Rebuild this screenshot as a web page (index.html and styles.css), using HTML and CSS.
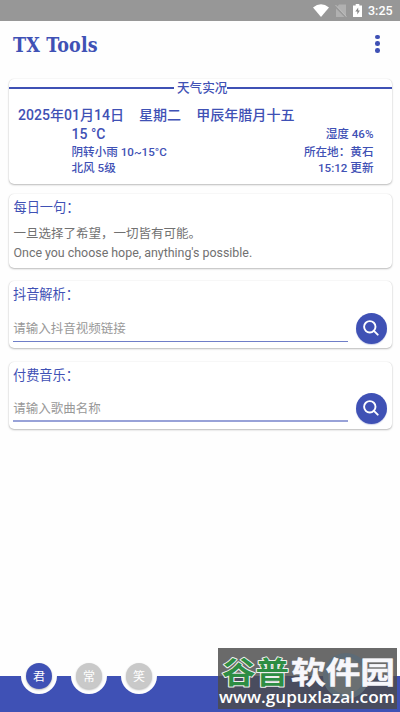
FILE: index.html
```html
<!DOCTYPE html>
<html lang="zh-CN">
<head>
<meta charset="utf-8">
<title>TX Tools</title>
<link rel="stylesheet" href="styles.css">
</head>
<body>
<div class="app">
  <div class="status">
    <svg class="wifi" width="16" height="13" viewBox="0 0 16 13"><path d="M0 3.600Q8-3 16 3.600L8 13Z" fill="#fff"/></svg>
    <svg class="sim" width="12" height="13" viewBox="0 0 12 13"><path d="M4 .5h7V13L2 3Z M1 4.500L9.500 13H1Z" fill="#b0b0b0"/><path d="M.5 1L11.500 12.500" stroke="#bcbcbc"/></svg>
    <svg class="battery" width="9" height="13" viewBox="0 0 9 13"><path d="M0 1.500h2.700V0h3.600v1.500H9V13H0Z" fill="#fff"/><path d="M5.200 3.500L2.300 7.600h2v3l2.600-4.100H5.200Z" fill="#888"/></svg>
    <span>3:25</span>
  </div>
  <header class="header">
    <h1>TX Tools</h1>
    <div class="menu"><i></i><i></i><i></i></div>
  </header>
  <main>
    <section class="card weather">
      <div class="caption"><span>天气实况</span></div>
      <div class="date"><span>2025年01月14日</span><span>星期二</span><span>甲辰年腊月十五</span></div>
      <div class="row temp"><b>15 °C</b><span>湿度 46%</span></div>
      <div class="row"><span>阴转小雨 10~15°C</span><span>所在地：黄石</span></div>
      <div class="row last"><span>北风 5级</span><span>15:12 更新</span></div>
    </section>
    <section class="card quote">
      <h2>每日一句：</h2>
      <p>一旦选择了希望，一切皆有可能。</p>
      <p class="en">Once you choose hope, anything's possible.</p>
    </section>
    <section class="card search">
      <h2>抖音解析：</h2>
      <div class="form">
        <div class="field">请输入抖音视频链接</div>
        <div class="button"><svg width="16" height="16" viewBox="0 0 16 16"><circle cx="6.800" cy="6.800" r="5.700"/><path d="M10.700 10.700L14.700 14.700"/></svg></div>
      </div>
    </section>
    <section class="card search second">
      <h2>付费音乐：</h2>
      <div class="form">
        <div class="field">请输入歌曲名称</div>
        <div class="button"><svg width="16" height="16" viewBox="0 0 16 16"><circle cx="6.800" cy="6.800" r="5.700"/><path d="M10.700 10.700L14.700 14.700"/></svg></div>
      </div>
    </section>
  </main>
  <nav class="bottom">
    <div class="tab active"><span>君</span></div>
    <div class="tab"><span>常</span></div>
    <div class="tab"><span>笑</span></div>
  </nav>
  <div class="mark">
    <div class="avatar"></div>
    <svg width="179" height="61" viewBox="0 0 179 61">
      <g class="brand">
        <text class="green" x="4" y="35" textLength="67" lengthAdjust="spacingAndGlyphs">谷普</text>
        <text class="white" x="73" y="35" textLength="104" lengthAdjust="spacingAndGlyphs">软件园</text>
      </g>
      <text class="url" x="1" y="55" textLength="176" lengthAdjust="spacingAndGlyphs">www.gupuxlazal.com</text>
    </svg>
  </div>
</div>
</body>
</html>
```
FILE: styles.css
```css
* { box-sizing: border-box; }
body {
  margin: 0;
  background: #fefefe;
  color: #3f51b5;
  font-family: Roboto, "Noto Sans CJK SC", sans-serif;
}
.app {
  position: relative;
  width: 400px;
  height: 712px;
  display: flex;
  flex-direction: column;
  overflow: hidden;
}
.status {
  height: 21px;
  background: #979797;
  display: flex;
  align-items: center;
  justify-content: flex-end;
  padding-right: 7px;
  color: #fff;
  font-size: 12.500px;
  font-weight: 500;
}
.wifi, .sim, .battery { margin-right: 6px; }
.status span { width: 25px; }
.header {
  height: 58px;
  padding: 0 20px 0 13px;
  display: flex;
  justify-content: space-between;
}
h1 {
  margin: 13px 0 0;
  font: bold 19.500px/24px "DejaVu Serif Condensed", "DejaVu Serif", serif;
  font-stretch: condensed;
  letter-spacing: .15px;
}
.menu {
  display: flex;
  flex-direction: column;
  gap: 2.400px;
  padding-top: 13.500px;
}
.menu i { width: 4.600px; height: 4.600px; border-radius: 50%; background: #3f51b5; }
main { padding: 0 8.500px; flex: 1; }
.card {
  border-radius: 5px;
  background: #fff;
  box-shadow: 0 1px 2px rgba(0,0,0,.26), 0 0 1px rgba(0,0,0,.16);
}
.weather { height: 105px; font-weight: 500; font-size: 12px; }
.caption {
  height: 18px;
  display: flex;
  align-items: center;
  font-size: 12.600px;
  line-height: 18px;
}
.caption::before, .caption::after { content: ""; height: 1.300px; background: #3f51b5; }
.caption::before { width: 165px; margin-right: 3.500px; }
.caption::after { flex: 1; }
.date {
  display: flex;
  gap: 15px;
  height: 20px;
  margin-top: 8px;
  padding-left: 9.500px;
  font-size: 14.050px;
  line-height: 20px;
  white-space: nowrap;
}
.row {
  display: flex;
  justify-content: space-between;
  height: 16px;
  padding: 0 18px 0 63px;
  font-size: 11.600px;
  line-height: 16px;
}
.temp { height: 19px; line-height: 18px; }
.temp b { font-size: 14px; font-weight: 500; }
h2 { margin: 0; font-size: 13.200px; line-height: 20px; font-weight: 400; }
.quote {
  height: 74px;
  margin-top: 9.500px;
  padding: 4px 5px;
  color: #717171;
}
.quote h2 { color: #3f51b5; }
.quote p { margin: 7px 0 0; font-size: 12.500px; line-height: 18px; }
.quote .en { margin-top: 1px; font-size: 12.450px; line-height: 18px; letter-spacing: -.02px; }
.search { height: 67.500px; margin-top: 13px; padding: 4px 5px 0 4.500px; }
.form { display: flex; justify-content: space-between; margin-top: 8px; }
.field {
  width: 335px;
  height: 29px;
  border-bottom: 1px solid #6f7ec8;
  padding-left: .3px;
  color: #999;
  font-size: 12.500px;
  line-height: 31px;
}
.second { margin-top: 13.500px; }
.second .form { margin-top: 7px; }
.second .field { border-bottom-width: 2px; border-color: #98a2d8; }
.button {
  width: 31px;
  height: 31px;
  border-radius: 50%;
  background: #3f51b5;
  display: flex;
  align-items: center;
  justify-content: center;
  box-shadow: 0 1px 1px rgba(63,81,181,.25);
}
.button svg { fill: none; stroke: #fff; stroke-width: 1.900; stroke-linecap: round; }
.bottom {
  height: 36px;
  background: #3f51b5;
  display: flex;
  gap: 14px;
  padding-left: 21px;
}
.tab {
  width: 36px;
  height: 36px;
  margin-top: -18px;
  border-radius: 50%;
  background: #fefefe;
  padding: 5px;
}
.tab span {
  display: block;
  width: 26px;
  height: 26px;
  border-radius: 50%;
  background: #c9c9c9;
  color: #fff;
  text-align: center;
  font-size: 12px;
  line-height: 28px;
  box-shadow: 0 1px 2px rgba(0,0,0,.28);
}
.tab.active span { background: #3f51b5; }
.mark {
  position: absolute;
  left: 218px;
  top: 648px;
  width: 179px;
  height: 61px;
  background: rgba(76,76,76,.83);
}
.mark svg { position: absolute; left: 0; top: 0; }
.avatar {
  position: absolute;
  left: 105px;
  top: 5px;
  width: 46px;
  height: 46px;
  border-radius: 50%;
  background: #6b7072;
  border: 5px solid #5d6b76;
}
.mark text { paint-order: stroke; stroke-linejoin: round; }
.brand { font: 700 30px "Noto Sans CJK SC", sans-serif; }
.green { fill: #2d8d43; stroke: #eee; stroke-width: 2px; }
.white { fill: #f7f7fb; stroke: #f7f7fb; stroke-width: .5px; }
.url { font: 600 17px "Open Sans", sans-serif; fill: #fff; }
```
